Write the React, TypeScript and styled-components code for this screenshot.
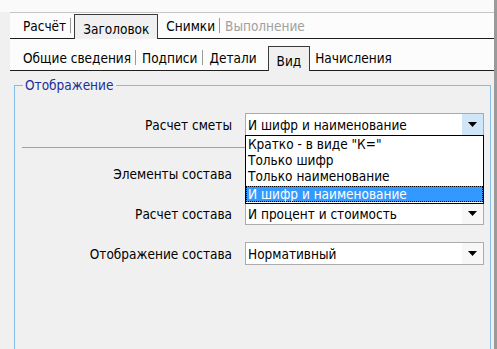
import React from 'react';
import styled, { createGlobalStyle } from 'styled-components';

const GlobalStyle = createGlobalStyle`
  html, body {
    margin: 0;
    padding: 0;
    background: #f0f0f0;
  }
  body {
    font-family: 'DejaVu Sans Condensed', 'DejaVu Sans', 'Liberation Sans', sans-serif;
    font-size: 13.5px;
    color: #000;
  }
`;

const Window = styled.div`
  width: 497px;
  height: 349px;
  background: #f0f0f0;
  display: flex;
  flex-direction: column;
  overflow: hidden;
  box-sizing: border-box;
  border-right: 3px solid #9a9a9a;
`;

const TopStrip = styled.div`
  height: 12px;
  background: #fafafa;
  flex: none;
`;

const TabRow = styled.div<{ $top?: boolean }>`
  margin-left: 10px;
  height: ${(p) => (p.$top ? 25 : 31)}px;
  background: #fcfcfc;
  border-top: ${(p) => (p.$top ? '1px solid #c6c6c6' : 'none')};
  border-bottom: 1px solid #1e1e1e;
  display: flex;
  align-items: flex-end;
  padding-left: 8px;
  flex: none;
`;

const Tab = styled.div<{ $active?: boolean; $disabled?: boolean; $sep?: boolean; $pad: number; $ml?: number }>`
  height: ${(p) => (p.$active ? 25 : 21)}px;
  display: flex;
  align-items: center;
  justify-content: center;
  padding: 0 ${(p) => p.$pad}px;
  margin-left: ${(p) => p.$ml ?? 0}px;
  box-sizing: border-box;
  white-space: nowrap;
  color: ${(p) => (p.$disabled ? '#a0a0a0' : '#000')};
  position: relative;
  background: ${(p) => (p.$active ? '#f0f0f0' : 'transparent')};
  border: ${(p) => (p.$active ? '1px solid #3a3a3a' : 'none')};
  border-bottom: none;
  margin-bottom: ${(p) => (p.$active ? -1 : 2)}px;
  padding-top: ${(p) => (p.$active ? 4 : 0)}px;
  ${(p) =>
    p.$sep
      ? `&::after {
    content: '';
    position: absolute;
    right: 0;
    top: 3px;
    bottom: 3px;
    border-right: 1px solid #9a9a9a;
  }`
      : ''}
`;

const Group = styled.fieldset`
  margin: 6px 3px 0 14px;
  padding: 20px 0 0 0;
  border: 1px solid #86bde6;
  border-bottom: none;
  flex: 1;
  position: relative;
  min-width: 0;
`;

const Legend = styled.legend`
  color: #1a2f9a;
  padding: 0 3px 0 2px;
  margin-left: 8px;
`;

const FormGrid = styled.div`
  display: grid;
  grid-template-columns: 217px 239px;
  column-gap: 13px;
  align-items: center;
  position: relative;
`;

const Label = styled.div`
  text-align: right;
  white-space: nowrap;
`;

const Combo = styled.div<{ $focus?: boolean }>`
  height: 23px;
  box-sizing: border-box;
  border: 1px solid ${(p) => (p.$focus ? '#7eb4ea' : '#acacac')};
  background: #fff;
  display: flex;
  align-items: center;
  position: relative;
`;

const ComboText = styled.div`
  flex: 1;
  padding-left: 2px;
  white-space: nowrap;
  overflow: hidden;
`;

const ComboButton = styled.div<{ $hover?: boolean }>`
  width: 21px;
  align-self: stretch;
  display: flex;
  align-items: center;
  justify-content: center;
  background: ${(p) => (p.$hover ? '#cfe5f8' : '#f7f7f7')};
`;

const Separator = styled.div`
  grid-column: 1 / span 2;
  height: 1px;
  background: #8fa6b8;
  margin: 11px 0 0 7px;
`;

const Gap = styled.div<{ $h: number }>`
  grid-column: 1 / span 2;
  height: ${(p) => p.$h}px;
`;

const DropList = styled.div`
  position: absolute;
  left: 230px;
  top: 22px;
  width: 239px;
  box-sizing: border-box;
  border: 1px solid #000;
  background: #fff;
  z-index: 5;
  padding: 0 0 1px;
`;

const DropItem = styled.div<{ $selected?: boolean }>`
  height: 16px;
  line-height: 16px;
  padding-left: 2px;
  white-space: nowrap;
  color: ${(p) => (p.$selected ? '#fff' : '#000')};
  background: ${(p) => (p.$selected ? '#3399ff' : 'transparent')};
  outline: ${(p) => (p.$selected ? '1px dotted #000' : 'none')};
  outline-offset: -1px;
  margin-top: ${(p) => (p.$selected ? 2 : 0)}px;
`;

const Arrow = () => (
  <svg width="9" height="5" viewBox="0 0 9 5">
    <path d="M0 0 H9 L4.5 5 Z" fill="#000" />
  </svg>
);

const options = ['Кратко - в виде "К="', 'Только шифр', 'Только наименование', 'И шифр и наименование'];

export default function App() {
  return (
    <>
      <GlobalStyle />
      <Window>
        <TopStrip />
        <TabRow $top>
          <Tab $sep $pad={5}>Расчёт</Tab>
          <Tab $active $pad={8} $ml={3}>Заголовок</Tab>
          <Tab $sep $pad={5} $ml={3}>Снимки</Tab>
          <Tab $disabled $pad={5}>Выполнение</Tab>
        </TabRow>
        <TabRow>
          <Tab $sep $pad={5}>Общие сведения</Tab>
          <Tab $sep $pad={6}>Подписи</Tab>
          <Tab $pad={6}>Детали</Tab>
          <Tab $active $pad={8} $ml={5}>Вид</Tab>
          <Tab $pad={5}>Начисления</Tab>
        </TabRow>
        <Group>
          <Legend>Отображение</Legend>
          <FormGrid>
            <Label>Расчет сметы</Label>
            <Combo $focus>
              <ComboText>И шифр и наименование</ComboText>
              <ComboButton $hover>
                <Arrow />
              </ComboButton>
            </Combo>
            <Separator />
            <Gap $h={14} />
            <Label>Элементы состава</Label>
            <Combo>
              <ComboText />
              <ComboButton>
                <Arrow />
              </ComboButton>
            </Combo>
            <Gap $h={17} />
            <Label>Расчет состава</Label>
            <Combo>
              <ComboText>И процент и стоимость</ComboText>
              <ComboButton>
                <Arrow />
              </ComboButton>
            </Combo>
            <Gap $h={17} />
            <Label>Отображение состава</Label>
            <Combo>
              <ComboText>Нормативный</ComboText>
              <ComboButton>
                <Arrow />
              </ComboButton>
            </Combo>
            <DropList>
              {options.map((o, i) => (
                <DropItem key={o} $selected={i === options.length - 1}>
                  {o}
                </DropItem>
              ))}
            </DropList>
          </FormGrid>
        </Group>
      </Window>
    </>
  );
}
